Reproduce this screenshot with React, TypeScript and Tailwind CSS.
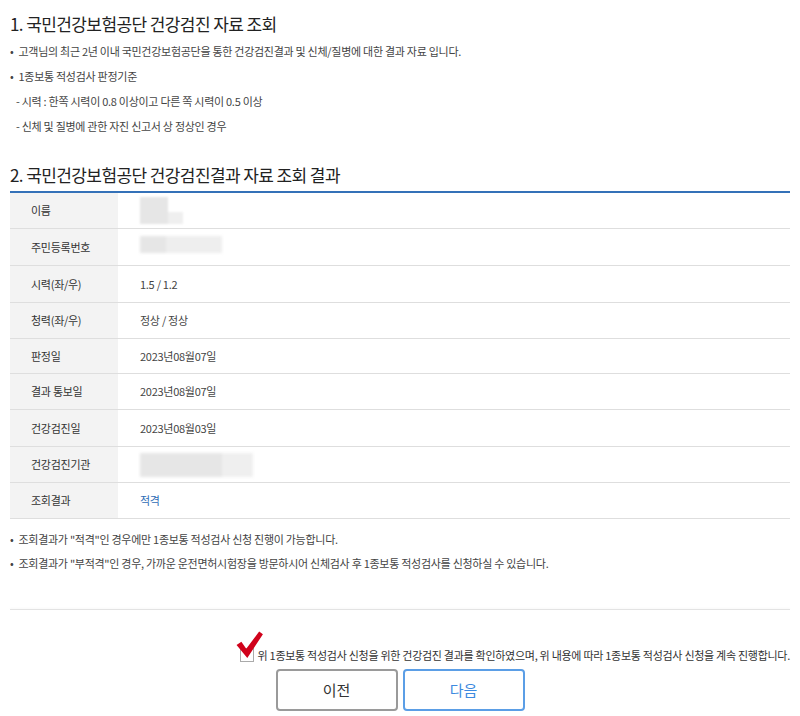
import React from "react";

const rows: { label: string; value?: string; blur?: "name" | "rrn" | "org"; blue?: boolean; h: string }[] = [
  { label: "이름", blur: "name", h: "h-[36px]" },
  { label: "주민등록번호", blur: "rrn", h: "h-[37px]" },
  { label: "시력(좌/우)", value: "1.5 / 1.2", h: "h-[37px]" },
  { label: "청력(좌/우)", value: "정상 / 정상", h: "h-[36px]" },
  { label: "판정일", value: "2023년08월07일", h: "h-[35px]" },
  { label: "결과 통보일", value: "2023년08월07일", h: "h-[36px]" },
  { label: "건강검진일", value: "2023년08월03일", h: "h-[37px]" },
  { label: "건강검진기관", blur: "org", h: "h-[36px]" },
  { label: "조회결과", value: "적격", blue: true, h: "h-[36px]" },
];

function Blurred({ kind }: { kind: "name" | "rrn" | "org" }) {
  if (kind === "name") {
    return (
      <div className="flex items-end blur-[1px]">
        <div className="w-[28px] h-[27px] bg-[#e6e6e6]" />
        <div className="w-[15px] h-[12px] bg-[#efefef]" />
      </div>
    );
  }
  if (kind === "rrn") {
    return (
      <div className="flex -mt-[6px] blur-[1.5px]">
        <div className="w-[26px] h-[17px] bg-[#e6e6e6]" />
        <div className="w-[56px] h-[17px] bg-[#eeeeee]" />
      </div>
    );
  }
  return (
    <div className="flex blur-[1.5px]">
      <div className="w-[82px] h-[24px] bg-[#e6e6e6]" />
      <div className="w-[31px] h-[24px] bg-[#efefef]" />
    </div>
  );
}

export default function App() {
  return (
    <div className="w-[800px] h-[716px] bg-white px-[10px] text-[#444] font-['Noto_Sans_CJK_KR',sans-serif] overflow-hidden">
      <h1 className="mt-[12px] text-[17px] leading-[24px] tracking-[-0.035em] text-[#222]">
        1. 국민건강보험공단 건강검진 자료 조회
      </h1>
      <ul className="mt-[3px] text-[11px] leading-[25px] tracking-[-0.025em]">
        <li className="flex gap-[5px]">
          <span>•</span>고객님의 최근 2년 이내 국민건강보험공단을 통한 건강검진결과 및 신체/질병에 대한 결과 자료 입니다.
        </li>
        <li className="flex gap-[5px]">
          <span>•</span>1종보통 적성검사 판정기준
        </li>
        <li className="pl-[6px]">- 시력 : 한쪽 시력이 0.8 이상이고 다른 쪽 시력이 0.5 이상</li>
        <li className="pl-[6px]">- 신체 및 질병에 관한 자진 신고서 상 정상인 경우</li>
      </ul>

      <h2 className="mt-[24px] pb-[4px] border-b-2 border-[#3471b8] text-[17px] leading-[24px] tracking-[-0.035em] text-[#222]">
        2. 국민건강보험공단 건강검진결과 자료 조회 결과
      </h2>
      <div className="text-[11px] tracking-[-0.025em]">
        {rows.map((r) => (
          <div key={r.label} className={`flex ${r.h} border-b border-[#dedede]`}>
            <div className="w-[108px] shrink-0 bg-[#f3f3f3] pl-[21px] flex items-center text-[#333]">
              {r.label}
            </div>
            <div className="flex-1 pl-[22px] flex items-center">
              {r.blur ? (
                <Blurred kind={r.blur} />
              ) : (
                <span className={r.blue ? "text-[#2f6cb5]" : ""}>{r.value}</span>
              )}
            </div>
          </div>
        ))}
      </div>

      <ul className="mt-[8px] text-[11px] leading-[24px] tracking-[-0.025em]">
        <li className="flex gap-[5px]">
          <span>•</span>조회결과가 "적격"인 경우에만 1종보통 적성검사 신청 진행이 가능합니다.
        </li>
        <li className="flex gap-[5px]">
          <span>•</span>조회결과가 "부적격"인 경우, 가까운 운전면허시험장을 방문하시어 신체검사 후 1종보통 적성검사를 신청하실 수 있습니다.
        </li>
      </ul>

      <div className="mt-[34px] border-t border-[#e3e3e3] shadow-[0_-1px_2px_rgba(0,0,0,0.04)]" />

      <div className="mt-[37px] flex justify-end items-center h-[16px] text-[11px] tracking-[-0.025em] text-[#333]">
        <div className="relative w-[14px] h-[14px] border border-[#aaa] bg-white mr-[4px] shrink-0">
          <svg
            className="absolute -left-[5px] -top-[18px]"
            width="28"
            height="28"
            viewBox="0 0 26 26"
          >
            <path d="M0.5 13 L5 10 L9.5 16.5 L21.5 0.5 L25 3 L10.5 25 Z" fill="#d0021b" />
          </svg>
        </div>
        <span className="whitespace-nowrap">위 1종보통 적성검사 신청을 위한 건강검진 결과를 확인하였으며, 위 내용에 따라 1종보통 적성검사 신청을 계속 진행합니다.</span>
      </div>

      <div className="mt-[6px] flex justify-center gap-[5px]">
        <button className="w-[122px] h-[42px] rounded-[4px] border-2 border-[#9a9a9a] bg-white text-[15px] text-[#333]">
          이전
        </button>
        <button className="w-[122px] h-[42px] rounded-[4px] border-2 border-[#5b9ee6] bg-white text-[15px] text-[#3d8ae0]">
          다음
        </button>
      </div>
    </div>
  );
}
